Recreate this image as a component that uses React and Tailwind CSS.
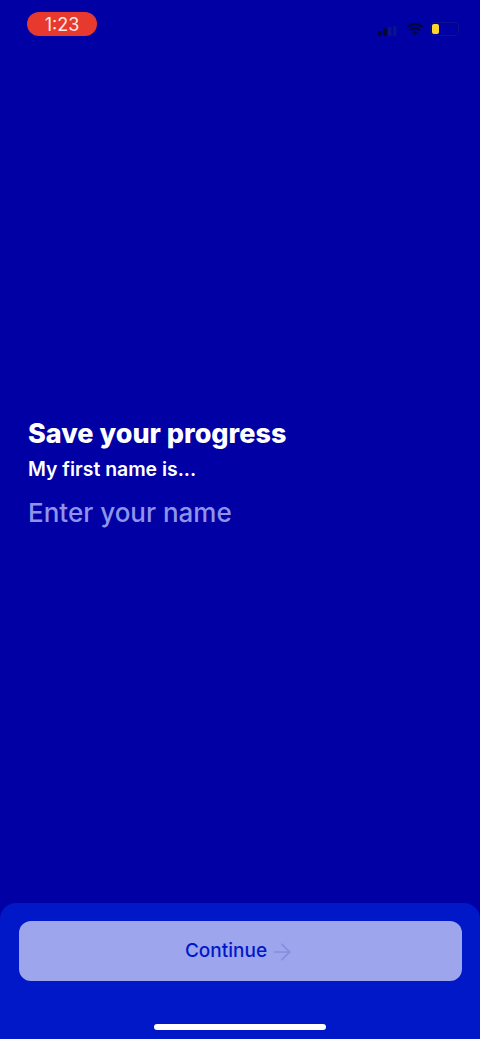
import { ArrowRight } from "lucide-react";

function StatusBar() {
  return (
    <div className="flex h-[48px] items-start justify-between pl-[27px] pr-[21px] pt-[12px]">
      <div className="flex h-[24px] w-[70px] items-center justify-center rounded-full bg-[#e8392f] text-[18px] font-normal text-[#fde9e6]">
        1:23
      </div>
      <div className="flex items-center pt-[10px]">
        {/* signal */}
        <svg width="20" height="10" viewBox="0 0 20 10" className="mr-[8px] mt-[3px]">
          <rect x="0" y="5" width="4" height="5" rx="0.8" fill="#030733" />
          <rect x="5" y="2.5" width="4" height="7.5" rx="0.8" fill="#030733" />
          <rect x="10" y="1" width="3.5" height="9" rx="0.8" fill="#0a128c" />
          <rect x="15" y="0" width="3.5" height="10" rx="0.8" fill="#0a128c" />
        </svg>
        {/* wifi */}
        <svg width="18" height="14" viewBox="0 0 19 14" className="mr-[6px]">
          <path d="M1.7 5.2A11 11 0 0 1 17.3 5.2" fill="none" stroke="#030733" strokeWidth="2.4" />
          <path d="M4.7 8.2A6.8 6.8 0 0 1 14.3 8.2" fill="none" stroke="#030733" strokeWidth="2.4" />
          <path d="M9.5 13.8 6.9 10.8A3.6 3.6 0 0 1 12.1 10.8z" fill="#030733" />
        </svg>
        {/* battery */}
        <div className="flex h-[14px] w-[29px] items-center rounded-[4px] border border-[#0a128c] py-[1px] pl-[1px]">
          <div className="h-full w-[7px] rounded-[2px] bg-[#fcd52e]" />
        </div>
      </div>
    </div>
  );
}

export default function App() {
  return (
    <div className="flex h-[1039px] w-[480px] flex-col bg-[#0000a4] font-['Inter',sans-serif]">
      <StatusBar />

      <div className="flex flex-1 flex-col pl-[28px] pt-[369px]">
        <h1 className="text-[27px] font-extrabold leading-[34px] text-white">Save your progress</h1>
        <p className="mt-[6px] text-[19.4px] font-semibold leading-[24px] text-white">My first name is...</p>
        <input
          type="text"
          placeholder="Enter your name"
          className="mt-[15px] h-[34px] w-[420px] bg-transparent text-[26px] font-medium leading-[34px] text-white outline-none placeholder:text-[#8f94ea]"
        />
      </div>

      <div className="flex h-[136px] flex-col rounded-t-[16px] bg-[#0118c8] px-[18.5px] pt-[18px]">
        <button className="flex h-[60px] w-full items-center justify-center rounded-[12px] bg-[#9da5ec] pt-[1px] text-[19px] font-[450] text-[#0118c8]">
          Continue
          <ArrowRight size={26} strokeWidth={1.6} className="ml-[2px] text-[#858de0]" />
        </button>
        <div className="mx-auto mt-[43px] h-[6px] w-[172px] rounded-full bg-white" />
      </div>
    </div>
  );
}
